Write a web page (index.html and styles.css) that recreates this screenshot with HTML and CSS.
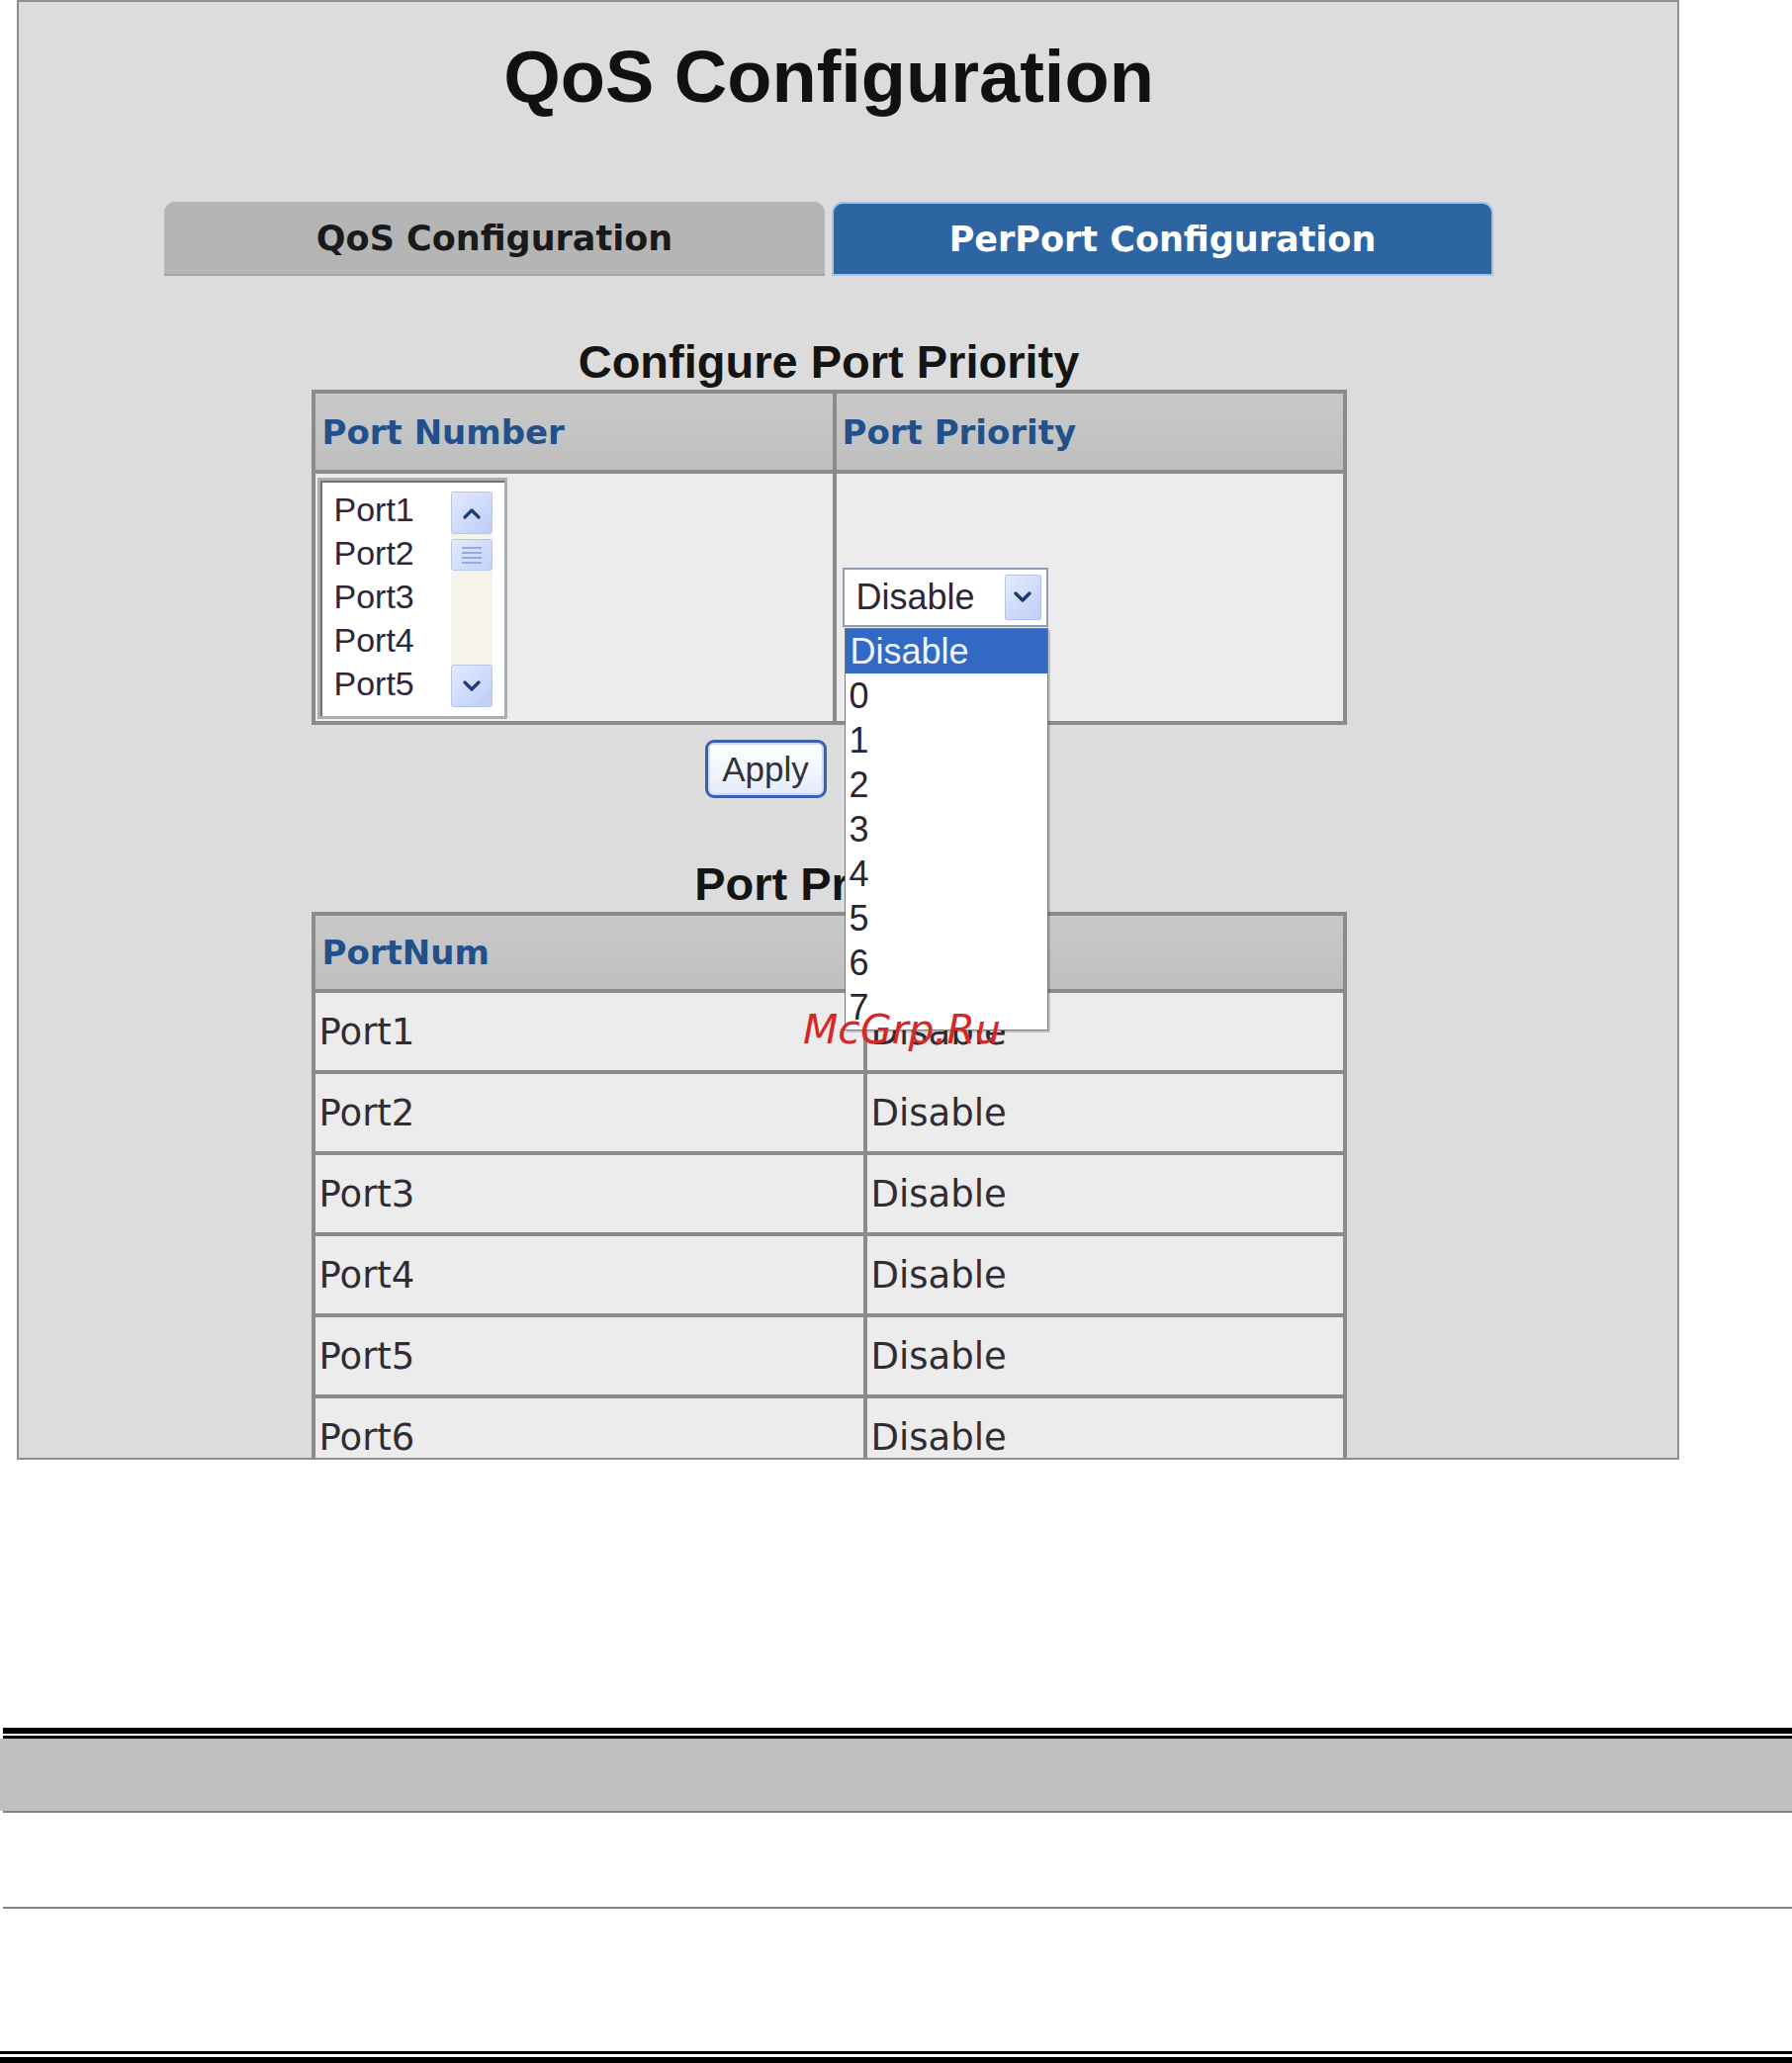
FILE: index.html
```html
<!DOCTYPE html>
<html lang="en">
<head>
<meta charset="utf-8">
<title>QoS Configuration</title>
<link rel="stylesheet" href="styles.css">
</head>
<body>
<div class="panel">
  <div class="content">
    <h1 class="title">QoS Configuration</h1>
    <div class="tabs">
      <div class="tab tab-off">QoS Configuration</div>
      <div class="tab tab-on">PerPort Configuration</div>
    </div>

    <h2 class="heading heading-first">Configure Port Priority</h2>
    <div class="grid grid-config">
      <div class="th">Port Number</div>
      <div class="th th-right">Port Priority</div>
      <div class="td cell-list">
        <div class="listbox">
          <div class="list-items">
            <div>Port1</div>
            <div>Port2</div>
            <div>Port3</div>
            <div>Port4</div>
            <div>Port5</div>
          </div>
          <div class="scrollbar">
            <div class="sb-btn">
              <svg width="20" height="12" viewBox="0 0 20 12"><polyline points="3,10 10,3 17,10" fill="none" stroke="#1f3d78" stroke-width="3.2" stroke-linecap="round" stroke-linejoin="round"/></svg>
            </div>
            <div class="sb-thumb">
              <span></span><span></span><span></span><span></span>
            </div>
            <div class="sb-track"></div>
            <div class="sb-btn">
              <svg width="20" height="12" viewBox="0 0 20 12"><polyline points="3,2 10,9 17,2" fill="none" stroke="#1f3d78" stroke-width="3.2" stroke-linecap="round" stroke-linejoin="round"/></svg>
            </div>
          </div>
        </div>
      </div>
      <div class="td cell-select">
        <div class="select">
          <span>Disable</span>
          <div class="select-btn">
            <svg width="22" height="14" viewBox="0 0 22 14"><polyline points="4,3 11,10 18,3" fill="none" stroke="#1d3a70" stroke-width="3.4" stroke-linecap="round" stroke-linejoin="round"/></svg>
          </div>
          <div class="options">
            <div class="opt opt-active">Disable</div>
            <div class="opt">0</div>
            <div class="opt">1</div>
            <div class="opt">2</div>
            <div class="opt">3</div>
            <div class="opt">4</div>
            <div class="opt">5</div>
            <div class="opt">6</div>
            <div class="opt">7</div>
          </div>
        </div>
      </div>
    </div>

    <div class="actions">
      <button class="apply" type="button">Apply</button>
    </div>

    <h2 class="heading">Port Priority</h2>
    <div class="grid grid-status">
      <div class="th">PortNum</div>
      <div class="th th-right">Priority</div>
      <div class="td">Port1</div><div class="td td-right">Disable</div>
      <div class="td">Port2</div><div class="td td-right">Disable</div>
      <div class="td">Port3</div><div class="td td-right">Disable</div>
      <div class="td">Port4</div><div class="td td-right">Disable</div>
      <div class="td">Port5</div><div class="td td-right">Disable</div>
      <div class="td">Port6</div><div class="td td-right">Disable</div>
    </div>
  </div>
</div>

<div class="doc">
  <div class="rule-thick"></div>
  <div class="rule-thin"></div>
  <div class="band"></div>
  <div class="band-line"></div>
  <div class="doc-space"></div>
  <div class="band-line"></div>
  <div class="doc-space-2"></div>
  <div class="foot-thin"></div>
  <div class="foot-thick"></div>
</div>

<div class="watermark">McGrp.Ru</div>
</body>
</html>
```

FILE: styles.css
```css
html, body {
  margin: 0;
  padding: 0;
  background: #ffffff;
  overflow: hidden;
}

body {
  position: relative;
  width: 1812px;
  height: 2086px;
  font-family: "Liberation Sans", Arial, sans-serif;
}

.panel {
  margin-left: 17px;
  width: 1681px;
  height: 1476px;
  box-sizing: border-box;
  border: 2px solid #8e8e8e;
  background: #dcdcdc;
  overflow: hidden;
}

.content {
  width: 1638px;
}

.title {
  margin: 0;
  padding-top: 33px;
  font: bold 74px/85px "Liberation Sans", Arial, sans-serif;
  text-align: center;
  color: #111111;
}

.tabs {
  display: flex;
  justify-content: center;
  gap: 7px;
  margin-top: 84px;
}

.tab {
  width: 668px;
  height: 75px;
  box-sizing: border-box;
  display: flex;
  align-items: center;
  justify-content: center;
  border-radius: 11px 11px 0 0;
  font: bold 35px "DejaVu Sans", Verdana, sans-serif;
}

.tab-off {
  background: #b5b5b5;
  color: #1a1a1a;
  border-bottom: 2px solid #a4a4a4;
}

.tab-on {
  width: 669px;
  background: #2d64a2;
  color: #ffffff;
  border: 2px solid #a6c1e3;
}

.heading {
  margin: 59px 0 0;
  font: bold 47px/56px "Liberation Sans", Arial, sans-serif;
  text-align: center;
  color: #141414;
}

.grid {
  width: 1047px;
  margin: 0 auto;
  box-sizing: border-box;
  display: grid;
  gap: 4px;
  border: 4px solid #8b8b8b;
  background: #8b8b8b;
}

.grid-config {
  grid-template-columns: 523px 512px;
  grid-template-rows: 77px 250px;
}

.grid-status {
  grid-template-columns: 554px 481px;
  grid-template-rows: 74px repeat(6, 78px);
}

.th {
  background: linear-gradient(#c9c9c9, #bfbfbf);
  color: #22508a;
  font: bold 34px "DejaVu Sans", Verdana, sans-serif;
  display: flex;
  align-items: center;
  padding-left: 7px;
}

.th-right {
  padding-left: 6px;
}

.td {
  background: #ececec;
  display: flex;
  align-items: center;
  padding-left: 4px;
  font: 37px "DejaVu Sans", Verdana, sans-serif;
  color: #302b35;
}

.td-right {
  padding-left: 4px;
}

.cell-list {
  align-items: flex-start;
  padding: 4px 0 0 2px;
}

.listbox {
  width: 192px;
  height: 244px;
  box-sizing: border-box;
  border: 3px solid #aaadb3;
  box-shadow: inset 2px 2px 0 #727272;
  background: #ffffff;
  display: flex;
  padding: 11px 12px 9px 14px;
}

.list-items {
  flex: 1;
  margin-top: -4px;
  font: 34px/44px "Liberation Sans", Arial, sans-serif;
  color: #2e2638;
}

.scrollbar {
  width: 42px;
  display: flex;
  flex-direction: column;
  background: #f5f3ea;
}

.sb-btn {
  height: 43px;
  box-sizing: border-box;
  border: 1px solid #b6c7ef;
  border-radius: 3px;
  background: linear-gradient(135deg, #e2eafe, #bccdf6);
  display: flex;
  align-items: center;
  justify-content: center;
}

.sb-thumb {
  height: 32px;
  margin-top: 5px;
  box-sizing: border-box;
  border: 1px solid #b6c7ef;
  border-radius: 3px;
  background: linear-gradient(135deg, #e2eafe, #c3d2f7);
  display: flex;
  flex-direction: column;
  justify-content: center;
  align-items: center;
  gap: 3px;
}

.sb-thumb span {
  display: block;
  width: 20px;
  height: 2px;
  background: #93abe3;
}

.sb-track {
  flex: 1;
}

.cell-select {
  padding-left: 6px;
}

.select {
  position: relative;
  width: 208px;
  height: 60px;
  box-sizing: border-box;
  border: 2px solid #8e9db1;
  background: #ffffff;
  display: flex;
  align-items: center;
  justify-content: space-between;
  padding: 0 5px 0 12px;
  font: 36px "Liberation Sans", Arial, sans-serif;
  color: #2d2733;
}

.select-btn {
  width: 37px;
  height: 46px;
  box-sizing: border-box;
  border: 1px solid #b3c5ee;
  border-radius: 2px;
  background: linear-gradient(135deg, #e4ebfe, #bdcdf6);
  display: flex;
  align-items: center;
  justify-content: center;
}

.options {
  position: absolute;
  left: 0;
  top: 59px;
  z-index: 5;
  width: 206px;
  box-sizing: border-box;
  border: 1px solid #7b7b7b;
  background: #ffffff;
  box-shadow: 2px 2px 0 rgba(0, 0, 0, 0.18);
}

.opt {
  height: 45px;
  padding-left: 4px;
  font: 36px/45px "Liberation Sans", Arial, sans-serif;
  color: #2a2530;
}

.opt-active {
  background: #3169c5;
  color: #eef3ff;
  padding-left: 5px;
}

.actions {
  width: 1047px;
  margin: 15px auto 0;
  display: flex;
}

.apply {
  margin-left: 398px;
  width: 123px;
  height: 59px;
  box-sizing: border-box;
  padding: 0;
  border: 3px solid #3b5fae;
  border-radius: 9px;
  background: linear-gradient(#ffffff, #e3ebfb);
  box-shadow: inset 0 0 0 2px #cddaf6;
  font: 35px "Liberation Sans", Arial, sans-serif;
  color: #333333;
}

.doc {
  margin-top: 271px;
}

.rule-thick {
  margin-left: 3px;
  height: 6px;
  background: #000000;
}

.rule-thin {
  margin: 2px 0 0 3px;
  height: 3px;
  background: #000000;
}

.band {
  height: 73px;
  background: #c0c0c0;
}

.band-line {
  margin-left: 3px;
  height: 2px;
  background: #838383;
}

.doc-space {
  height: 95px;
}

.doc-space-2 {
  height: 144px;
}

.foot-thin {
  height: 3px;
  background: #000000;
}

.foot-thick {
  margin-top: 3px;
  height: 6px;
  background: #000000;
}

.watermark {
  position: absolute;
  left: 812px;
  top: 1021px;
  z-index: 10;
  font: italic 41px/41px "DejaVu Sans", sans-serif;
  color: #d62828;
}
```
